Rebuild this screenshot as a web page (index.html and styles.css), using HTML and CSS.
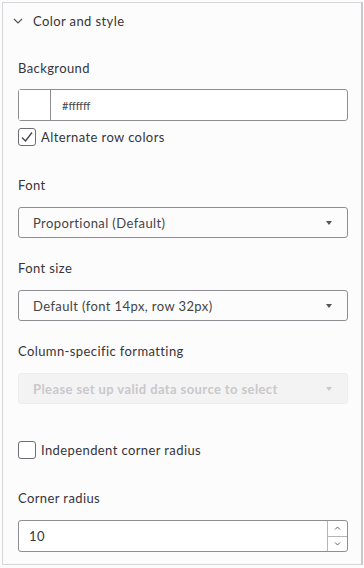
FILE: index.html
```html
<!DOCTYPE html>
<html lang="en">
<head>
    <meta charset="UTF-8">
    <meta name="viewport" content="width=device-width, initial-scale=1.0">
    <title>Color and style</title>
    <link rel="stylesheet" href="styles.css">
</head>
<body>
    <div class="panel">
        <div class="panel-header">
            <svg class="chevron" width="10" height="6" viewBox="0 0 10 6">
                <path d="M1 1 L5 5 L9 1" fill="none" stroke="#555" stroke-width="1.2"/>
            </svg>
            <span>Color and style</span>
        </div>

        <div class="panel-body">
            <div class="label label-first">Background</div>
            <div class="color-input">
                <div class="swatch"></div>
                <div class="color-value">#ffffff</div>
            </div>
            <label class="check-row check-first">
                <span class="box checked">
                    <svg width="14" height="12" viewBox="0 0 14 12">
                        <path d="M2 6.5 L5.5 10 L12 1.5" fill="none" stroke="#444" stroke-width="1.3"/>
                    </svg>
                </span>
                <span>Alternate row colors</span>
            </label>

            <div class="label label-gap-lg">Font</div>
            <div class="select">
                <span>Proportional (Default)</span>
                <span class="caret"></span>
            </div>

            <div class="label">Font size</div>
            <div class="select">
                <span>Default (font 14px, row 32px)</span>
                <span class="caret"></span>
            </div>

            <div class="label">Column-specific formatting</div>
            <div class="select disabled">
                <span>Please set up valid data source to select</span>
                <span class="caret"></span>
            </div>

            <label class="check-row check-gap">
                <span class="box"></span>
                <span>Independent corner radius</span>
            </label>

            <div class="label label-gap-lg">Corner radius</div>
            <div class="number-input">
                <div class="number-value">10</div>
                <div class="spinner">
                    <div class="spin">
                        <svg width="7" height="4" viewBox="0 0 7 4"><path d="M1 3.5 L3.5 1 L6 3.5" fill="none" stroke="#666" stroke-width="1"/></svg>
                    </div>
                    <div class="spin">
                        <svg width="7" height="4" viewBox="0 0 7 4"><path d="M1 0.5 L3.5 3 L6 0.5" fill="none" stroke="#666" stroke-width="1"/></svg>
                    </div>
                </div>
            </div>
        </div>
    </div>
</body>
</html>
```

FILE: styles.css
```css
* {
    box-sizing: border-box;
}

body {
    margin: 0;
    background-color: #fdfcfd;
    font-family: Lato, "Open Sans", Arial, sans-serif;
    font-size: 13px;
    letter-spacing: 0.4px;
    color: #363538;
}

.panel {
    margin: 2px 0 0 2px;
    width: 361px;
    height: 563px;
    border: 1px solid #d6d5da;
    border-right: 2px solid #c9c8cd;
    background-color: #fdfcfd;
}

.panel-header {
    display: flex;
    align-items: center;
    height: 35px;
    padding-left: 10px;
}

.chevron {
    margin-right: 10px;
}

.panel-body {
    padding: 0 13px 0 15px;
}

.label {
    line-height: 16px;
    margin-top: 22px;
    margin-bottom: 14px;
}

.label-first {
    margin-top: 22px;
    margin-bottom: 13px;
}

.label-gap-lg {
    margin-top: 31px;
}

.color-input {
    display: flex;
    height: 32px;
    border: 1px solid #8e8d91;
    border-radius: 3px;
    background-color: #fff;
}

.swatch {
    width: 32px;
    border-right: 1px solid #8e8d91;
    background-color: #fff;
}

.color-value {
    display: flex;
    align-items: center;
    padding-left: 11px;
    font-size: 11px;
    letter-spacing: 0;
    color: #444;
}

.check-row {
    display: flex;
    align-items: center;
    gap: 5px;
    height: 18px;
}

.check-first {
    margin-top: 7px;
}

.check-gap {
    margin-top: 37px;
}

.box {
    display: flex;
    align-items: center;
    justify-content: center;
    width: 18px;
    height: 18px;
    border: 1px solid #6e6d72;
    border-radius: 3px;
    background-color: #fff;
}

.select {
    display: flex;
    align-items: center;
    justify-content: space-between;
    height: 31px;
    padding: 0 15px 0 14px;
    border: 1px solid #8e8d91;
    border-radius: 3px;
    background-color: #fdfcfd;
    color: #444;
}

.caret {
    width: 0;
    height: 0;
    border-left: 3.5px solid transparent;
    border-right: 3.5px solid transparent;
    border-top: 4px solid #555;
}

.select.disabled {
    border-color: #eeedef;
    background-color: #f4f3f4;
    color: #c9c8cb;
    font-weight: bold;
}

.select.disabled .caret {
    border-top-color: #c9c8cb;
}

.number-input {
    display: flex;
    height: 32px;
    border: 1px solid #8e8d91;
    border-radius: 3px;
    background-color: #fff;
}

.number-value {
    flex: 1;
    display: flex;
    align-items: center;
    padding-left: 10px;
}

.spinner {
    display: flex;
    flex-direction: column;
    width: 20px;
    border-left: 1px solid #b5b4b8;
}

.spin {
    flex: 1;
    display: flex;
    align-items: center;
    justify-content: center;
}

.spin + .spin {
    border-top: 1px solid #b5b4b8;
}
```
